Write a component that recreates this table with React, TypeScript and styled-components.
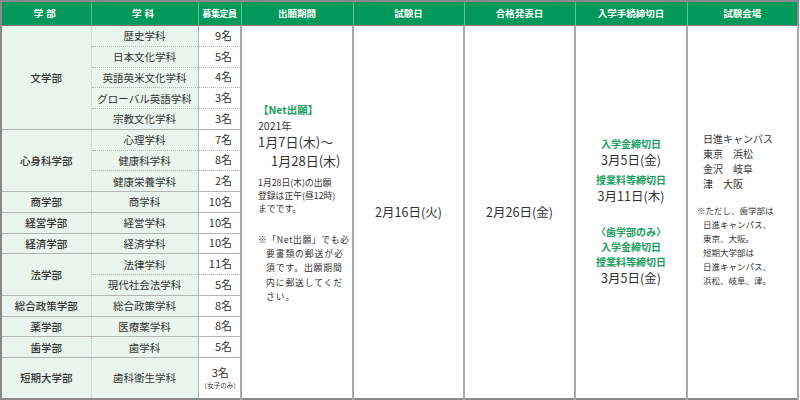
import React from "react";
import styled, { createGlobalStyle } from "styled-components";

const GlobalStyle = createGlobalStyle`
  html, body {
    margin: 0;
    padding: 0;
    background: #ffffff;
  }
  body {
    font-family: "Noto Sans CJK JP", "Noto Sans", sans-serif;
    color: #333333;
  }
`;

const GREEN = "#00995a";
const LIGHT = "#e9f5ee";
const LINE = "#a9a9a9";

const Table = styled.table`
  width: 797px;
  height: 397px;
  border-collapse: collapse;
  table-layout: fixed;
  border: 2px solid #8a8a8a;
  font-size: 10.5px;
  line-height: 1.45;
`;

const Th = styled.th<{ $spaced?: boolean; $narrow?: boolean }>`
  height: 23px;
  padding: 0;
  background: ${GREEN};
  color: #ffffff;
  font-size: ${(p) => (p.$narrow ? 9 : 9.5)}px;
  font-weight: 700;
  letter-spacing: ${(p) => (p.$spaced ? "3px" : p.$narrow ? "-0.4px" : "0")};
  white-space: nowrap;
  border-left: 1px solid #5fbf8f;
  border-bottom: 1px solid #7a7a7a;
`;

const Row = styled.tr<{ $h?: number }>`
  height: ${(p) => p.$h ?? 20.75}px;
`;

const Faculty = styled.td`
  padding: 0;
  background: ${LIGHT};
  text-align: center;
  font-weight: 500;
  border-bottom: 1px solid #b4b4b4;
  border-right: 1px dotted #c6c6c6;
`;

const Dept = styled.td<{ $last?: boolean }>`
  padding: 0;
  background: ${LIGHT};
  text-align: center;
  border-bottom: 1px ${(p) => (p.$last ? "solid #b4b4b4" : "dotted #b4b4b4")};
  border-right: 1px solid #b0b0b0;
`;

const Quota = styled.td<{ $last?: boolean; $center?: boolean }>`
  padding: ${(p) => (p.$center ? "0" : "0 8px 0 0")};
  text-align: ${(p) => (p.$center ? "center" : "right")};
  font-size: 11px;
  white-space: nowrap;
  border-bottom: 1px ${(p) => (p.$last ? "solid #b4b4b4" : "dotted #b4b4b4")};
  border-right: 2px solid ${LINE};
`;

const QuotaStack = styled.div`
  display: flex;
  flex-direction: column;
  align-items: center;
  padding-left: 2px;
  font-size: 11px;
  line-height: 1.45;
`;

const Tiny = styled.span`
  font-size: 6.5px;
  line-height: 1.5;
  white-space: nowrap;
`;

const Tall = styled.td<{ $align?: "center" | "left" }>`
  padding: 0;
  vertical-align: middle;
  text-align: ${(p) => p.$align ?? "center"};
  border-right: 2px solid ${LINE};
`;

const Block = styled.div<{ $pad?: number; $lift?: number }>`
  display: flex;
  flex-direction: column;
  padding-left: ${(p) => p.$pad ?? 0}px;
  padding-bottom: ${(p) => p.$lift ?? 0}px;
`;

const Green = styled.div<{ $size?: number; $gap?: number }>`
  color: #17a060;
  font-size: ${(p) => p.$size ?? 10}px;
  font-weight: 700;
  line-height: 1.5;
  margin-top: ${(p) => p.$gap ?? 0}px;
  white-space: nowrap;
`;

const Line = styled.div<{ $size?: number }>`
  font-size: ${(p) => p.$size ?? 10.5}px;
  line-height: 1.5;
  white-space: nowrap;
`;

const Small = styled.div<{ $indent?: number; $gap?: number; $spacing?: number; $lh?: number }>`
  font-size: 8.8px;
  line-height: ${(p) => p.$lh ?? 1.45};
  padding-left: ${(p) => p.$indent ?? 0}px;
  margin-top: ${(p) => p.$gap ?? 0}px;
  letter-spacing: ${(p) => p.$spacing ?? 0}px;
  white-space: nowrap;
`;

const Note = styled.div<{ $gap?: number; $hang?: boolean }>`
  font-size: 8.5px;
  line-height: 1.65;
  margin-top: ${(p) => p.$gap ?? 0}px;
  margin-left: ${(p) => (p.$hang ? -6 : 0)}px;
  white-space: nowrap;
`;

const Date = styled.div<{ $size?: number; $indent?: number }>`
  font-size: ${(p) => p.$size ?? 12.5}px;
  line-height: 1.45;
  padding-left: ${(p) => p.$indent ?? 0}px;
  white-space: nowrap;
`;

type Dep = { name: string; quota: React.ReactNode };
type Fac = { name: string; deps: Dep[]; tall?: boolean };

const faculties: Fac[] = [
  {
    name: "文学部",
    deps: [
      { name: "歴史学科", quota: "9名" },
      { name: "日本文化学科", quota: "5名" },
      { name: "英語英米文化学科", quota: "4名" },
      { name: "グローバル英語学科", quota: "3名" },
      { name: "宗教文化学科", quota: "3名" },
    ],
  },
  {
    name: "心身科学部",
    deps: [
      { name: "心理学科", quota: "7名" },
      { name: "健康科学科", quota: "8名" },
      { name: "健康栄養学科", quota: "2名" },
    ],
  },
  { name: "商学部", deps: [{ name: "商学科", quota: "10名" }] },
  { name: "経営学部", deps: [{ name: "経営学科", quota: "10名" }] },
  { name: "経済学部", deps: [{ name: "経済学科", quota: "10名" }] },
  {
    name: "法学部",
    deps: [
      { name: "法律学科", quota: "11名" },
      { name: "現代社会法学科", quota: "5名" },
    ],
  },
  { name: "総合政策学部", deps: [{ name: "総合政策学科", quota: "8名" }] },
  { name: "薬学部", deps: [{ name: "医療薬学科", quota: "8名" }] },
  { name: "歯学部", deps: [{ name: "歯学科", quota: "5名" }] },
  {
    name: "短期大学部",
    tall: true,
    deps: [
      {
        name: "歯科衛生学科",
        quota: (
          <QuotaStack>
            <span>3名</span>
            <Tiny>（女子のみ）</Tiny>
          </QuotaStack>
        ),
      },
    ],
  },
];

const totalRows = faculties.reduce((n, f) => n + f.deps.length, 0);

const ApplyPeriod = () => (
  <Block $pad={16} $lift={18}>
    <Green $size={10.5}>【Net出願】</Green>
    <Line $size={10.5}>2021年</Line>
    <Date $size={13}>1月7日(木)～</Date>
    <Date $size={13} $indent={13}>
      1月28日(木)
    </Date>
    <Small $gap={6}>1月28日(木)の出願</Small>
    <Small>登録は正午(昼12時)</Small>
    <Small>までです。</Small>
    <Small $gap={18} $spacing={0.6} $lh={1.6}>※「Net出願」でも必</Small>
    <Small $indent={8} $spacing={0.9} $lh={1.6}>要書類の郵送が必</Small>
    <Small $indent={8} $spacing={0.9} $lh={1.6}>須です。出願期間</Small>
    <Small $indent={8} $spacing={0.9} $lh={1.6}>内に郵送してくだ</Small>
    <Small $indent={8} $spacing={0.9} $lh={1.6}>さい。</Small>
  </Block>
);

const Procedure = () => (
  <Block>
    <Green>入学金締切日</Green>
    <Date>3月5日(金)</Date>
    <Green $gap={3}>授業料等締切日</Green>
    <Date>3月11日(木)</Date>
    <Green $gap={19}>〈歯学部のみ〉</Green>
    <Green>入学金締切日</Green>
    <Green>授業料等締切日</Green>
    <Date>3月5日(金)</Date>
  </Block>
);

const Venue = () => (
  <Block $pad={15} $lift={6}>
    <Line $size={10}>日進キャンパス</Line>
    <Line $size={10}>東京　浜松</Line>
    <Line $size={10}>金沢　岐阜</Line>
    <Line $size={10}>津　大阪</Line>
    <Note $gap={12} $hang>
      ※ただし、歯学部は
    </Note>
    <Note>日進キャンパス、</Note>
    <Note>東京、大阪。</Note>
    <Note>短期大学部は</Note>
    <Note>日進キャンパス、</Note>
    <Note>浜松、岐阜、津。</Note>
  </Block>
);

const Col = styled.col<{ $w: number }>`
  width: ${(p) => p.$w}px;
`;

const Page = styled.div`
  width: 800px;
  height: 400px;
  overflow: hidden;
`;

export default function App() {
  const widths = [90, 107, 43, 112, 111, 111, 112, 111];
  let first = true;
  return (
    <Page>
      <GlobalStyle />
      <Table>
        <colgroup>
          {widths.map((w, i) => (
            <Col key={i} $w={w} />
          ))}
        </colgroup>
        <thead>
          <tr>
            <Th $spaced>学部</Th>
            <Th $spaced>学科</Th>
            <Th $narrow>募集定員</Th>
            <Th>出願期間</Th>
            <Th>試験日</Th>
            <Th>合格発表日</Th>
            <Th>入学手続締切日</Th>
            <Th>試験会場</Th>
          </tr>
        </thead>
        <tbody>
          {faculties.map((f) =>
            f.deps.map((d, i) => {
              const isFirst = first;
              first = false;
              const last = i === f.deps.length - 1;
              return (
                <Row key={f.name + d.name} $h={f.tall ? 41 : 20.75}>
                  {i === 0 && <Faculty rowSpan={f.deps.length}>{f.name}</Faculty>}
                  <Dept $last={last}>{d.name}</Dept>
                  <Quota $last={last} $center={f.tall}>
                    {d.quota}
                  </Quota>
                  {isFirst && (
                    <>
                      <Tall rowSpan={totalRows} $align="left">
                        <ApplyPeriod />
                      </Tall>
                      <Tall rowSpan={totalRows}>
                        <Date>2月16日(火)</Date>
                      </Tall>
                      <Tall rowSpan={totalRows}>
                        <Date>2月26日(金)</Date>
                      </Tall>
                      <Tall rowSpan={totalRows}>
                        <Procedure />
                      </Tall>
                      <Tall rowSpan={totalRows} $align="left">
                        <Venue />
                      </Tall>
                    </>
                  )}
                </Row>
              );
            })
          )}
        </tbody>
      </Table>
    </Page>
  );
}
